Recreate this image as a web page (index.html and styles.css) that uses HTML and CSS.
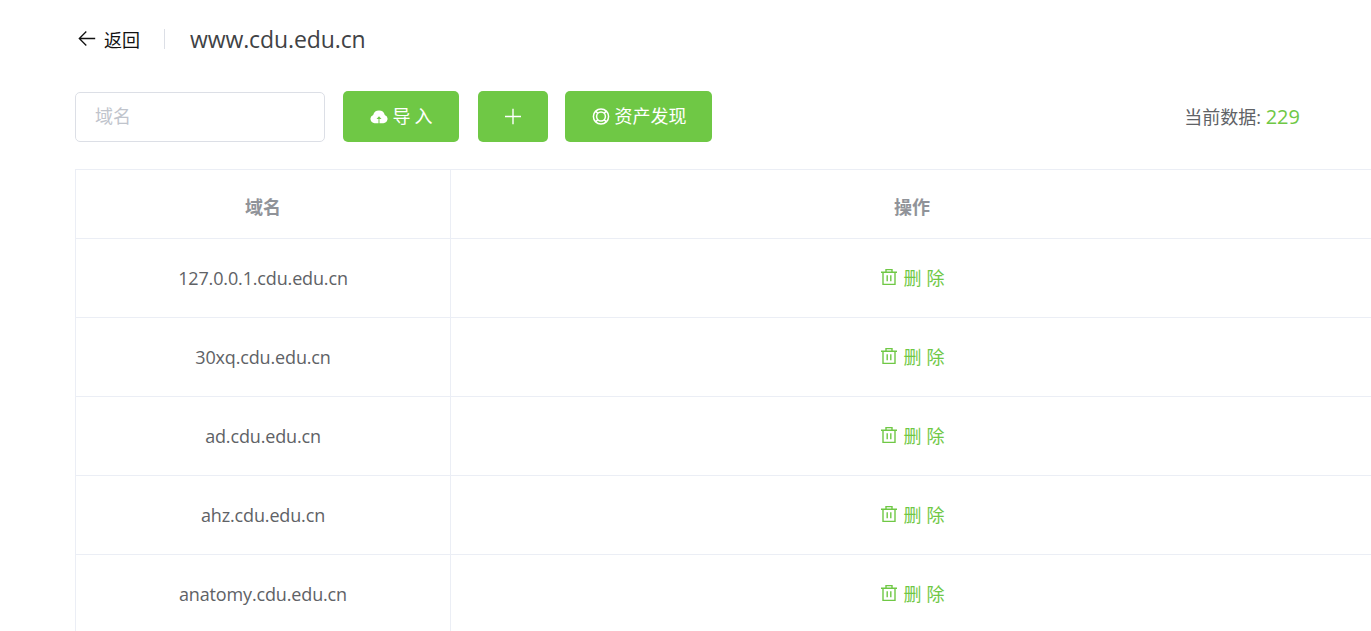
FILE: index.html
```
<!DOCTYPE html>
<html lang="zh-CN">
<head>
    <meta charset="UTF-8">
    <meta name="viewport" content="width=device-width, initial-scale=1.0">
    <title>www.cdu.edu.cn</title>
    <link rel="stylesheet" href="styles.css">
</head>
<body>

<!-- Shared icons -->
<svg class="sprite">
    <symbol id="icon-delete" viewBox="0 0 18 18">
        <path d="M1 4.2h16M3 4.2v12.2h12v-12.2M6 4V1.6h6V4M7.2 7.2v6M10.8 7.2v6" fill="none" stroke="currentColor" stroke-width="1.4"/>
    </symbol>
</svg>

<div class="container">
    <!-- Page header -->
    <div class="page-header">
        <a class="back">
            <svg class="back-icon" viewBox="0 0 18 18"><path d="M17.2 8.5H1.5M8.3 1.5L1.3 8.5l7 7" fill="none" stroke="currentColor" stroke-width="1.3"/></svg>
            <span>返回</span>
        </a>
        <h1 class="title">www.cdu.edu.cn</h1>
    </div>

    <!-- Toolbar -->
    <div class="toolbar">
        <input class="search" type="text" placeholder="域名">
        <button class="btn btn-import">
            <svg class="icon" viewBox="0 0 18 18">
                <path d="M4.6 15.2A4.3 4.3 0 0 1 3.2 6.9A6 6 0 0 1 14.8 6.9A4.3 4.3 0 0 1 13.4 15.2H9.5V11.1H11.5L9 8.3L6.5 11.1H8.5V15.2Z" fill="currentColor"/>
            </svg>
            <span class="spaced">导入</span>
        </button>
        <button class="btn btn-add">
            <svg class="icon" viewBox="0 0 18 18"><path d="M9 .8v15.4M1 8.5h16" fill="none" stroke="currentColor" stroke-width="1.4"/></svg>
        </button>
        <button class="btn btn-find">
            <svg class="icon" viewBox="0 0 18 18">
                <g fill="none" stroke="currentColor" stroke-width="1.5">
                    <circle cx="9" cy="8.5" r="7.6"/>
                    <circle cx="9" cy="8.5" r="4.4"/>
                    <path d="M3.6 3.1l2.3 2.3M14.4 3.1l-2.3 2.3M3.6 13.9l2.3-2.3M14.4 13.9l-2.3-2.3"/>
                </g>
            </svg>
            <span>资产发现</span>
        </button>
        <div class="total">当前数据: <span class="count">229</span></div>
    </div>

    <!-- Domain list -->
    <table class="table">
        <thead>
            <tr><th class="col-domain">域名</th><th>操作</th></tr>
        </thead>
        <tbody>
            <tr>
                <td>127.0.0.1.cdu.edu.cn</td>
                <td><a class="delete"><svg class="icon"><use href="#icon-delete"/></svg><span class="spaced">删除</span></a></td>
            </tr>
            <tr>
                <td>30xq.cdu.edu.cn</td>
                <td><a class="delete"><svg class="icon"><use href="#icon-delete"/></svg><span class="spaced">删除</span></a></td>
            </tr>
            <tr>
                <td>ad.cdu.edu.cn</td>
                <td><a class="delete"><svg class="icon"><use href="#icon-delete"/></svg><span class="spaced">删除</span></a></td>
            </tr>
            <tr>
                <td>ahz.cdu.edu.cn</td>
                <td><a class="delete"><svg class="icon"><use href="#icon-delete"/></svg><span class="spaced">删除</span></a></td>
            </tr>
            <tr>
                <td>anatomy.cdu.edu.cn</td>
                <td><a class="delete"><svg class="icon"><use href="#icon-delete"/></svg><span class="spaced">删除</span></a></td>
            </tr>
        </tbody>
    </table>
</div>

</body>
</html>
```
FILE: styles.css
```
* {
    margin: 0;
    padding: 0;
    box-sizing: border-box;
}
body {
    font-family: "Open Sans", "Noto Sans CJK SC", sans-serif;
    font-size: 18px;
    color: #606266;
    background-color: #fff;
    overflow: hidden;
}
.sprite {
    display: none;
}
.container {
    padding: 24px 0 0 75px;
}

/* Header */
.page-header {
    display: flex;
    align-items: center;
    height: 30px;
}
.back {
    display: flex;
    align-items: center;
    height: 20px;
    padding-left: 3px;
    padding-right: 24px;
    margin-right: 25px;
    border-right: 1px solid #dcdfe6;
    color: #111;
    cursor: pointer;
}
.back-icon {
    width: 18px;
    height: 18px;
    margin-right: 8px;
}
.title {
    font-size: 23px;
    font-weight: 400;
    letter-spacing: -0.1px;
    color: #404245;
}

/* Toolbar */
.toolbar {
    display: flex;
    align-items: center;
    height: 51px;
    margin-top: 37px;
    padding-right: 71px;
}
.search {
    width: 250px;
    height: 50px;
    margin-right: 18px;
    margin-top: 1px;
    padding: 0 19px 2px;
    border: 1px solid #dcdfe6;
    border-radius: 5px;
    font: inherit;
    outline: none;
}
.search::placeholder {
    color: #c0c4cc;
}
.btn {
    display: flex;
    align-items: center;
    justify-content: center;
    gap: 5px;
    height: 51px;
    border: none;
    border-radius: 5px;
    background-color: #6fc845;
    color: #fff;
    font: inherit;
    cursor: pointer;
}
.btn span {
    padding-bottom: 3px;
}
.btn-import {
    width: 116px;
    margin-right: 19px;
}
.btn-add {
    width: 70px;
    margin-right: 17px;
}
.btn-find {
    width: 147px;
    padding-left: 1px;
}
.icon {
    width: 18px;
    height: 18px;
}
.spaced {
    letter-spacing: 4px;
    margin-right: -4px;
}
.total {
    margin-left: auto;
}
.count {
    font-size: 20px;
    color: #6fc845;
}

/* Table */
.table {
    width: 1299px;
    table-layout: fixed;
    border-collapse: collapse;
}
.toolbar + .table {
    margin-top: 27px;
}
.table th,
.table td {
    height: 79px;
    border: 1px solid #ebeef5;
    text-align: center;
    vertical-align: middle;
}
.table td {
    letter-spacing: -0.15px;
}
.table th {
    height: 69px;
    padding-top: 4px;
    color: #909399;
    font-weight: 700;
}
.col-domain {
    width: 375px;
}
.delete {
    display: inline-flex;
    align-items: center;
    gap: 6px;
    margin-bottom: 2px;
    color: #6fc845;
    vertical-align: middle;
    cursor: pointer;
}
.delete .spaced {
    letter-spacing: 5px;
    margin-right: -5px;
}
```
